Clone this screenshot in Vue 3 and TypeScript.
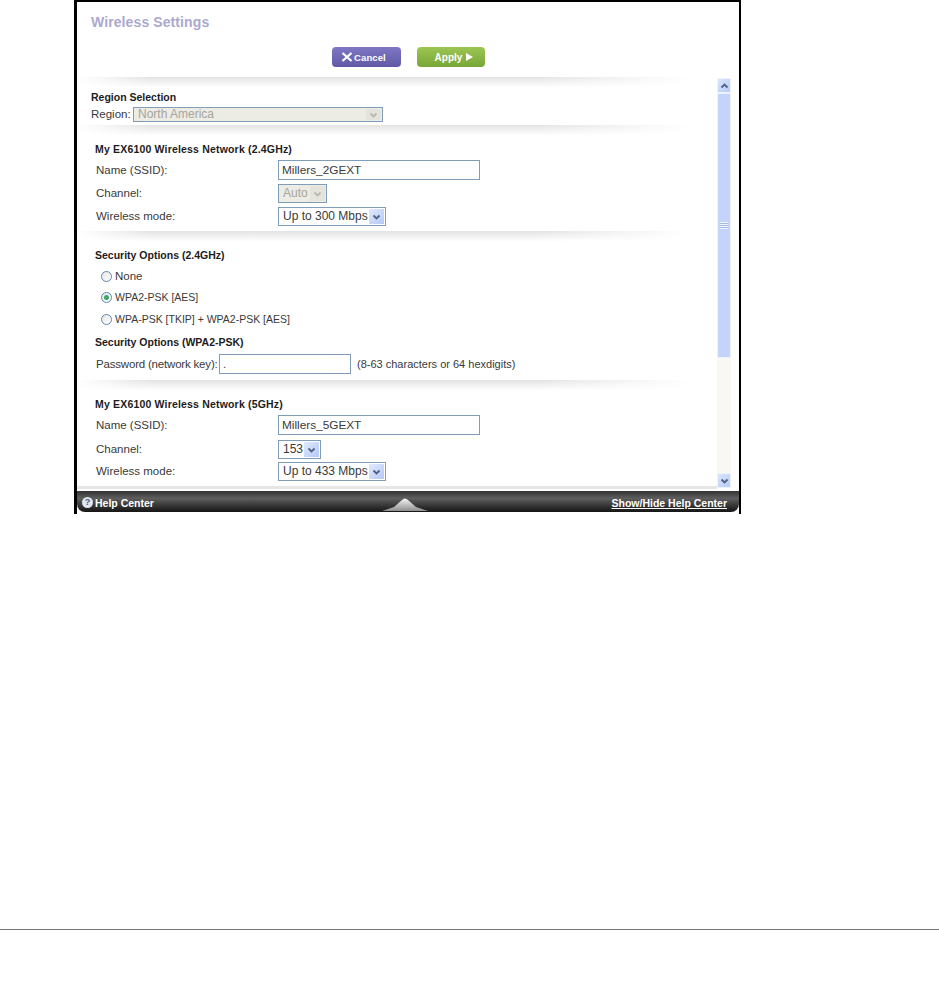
<script setup lang="ts">
const chevron = 'M1.5 1.5 L4.5 4.5 L7.5 1.5'
</script>

<template>
  <div class="page">
    <section class="frame">
      <h1 class="title">Wireless Settings</h1>
      <div class="actions">
        <button class="btn cancel">
          <svg class="x" width="12" height="10" viewBox="0 0 12 10"><path d="M1.5 1 L10.5 9 M10.5 1 L1.5 9" /></svg>
          <span>Cancel</span>
        </button>
        <button class="btn apply">Apply <span class="tri"></span></button>
      </div>
      <div class="body">
        <div class="content">
          <div class="divider"></div>
          <h2 class="head region-head">Region Selection</h2>
          <div class="region-row mt3">
            <label class="region-label">Region:</label>
            <div class="select disabled region-select"><span>North America</span>
              <span class="arrow"><svg class="chev" width="9" height="6" viewBox="0 0 9 6"><path :d="chevron" /></svg></span>
            </div>
          </div>
          <div class="divider mt3"></div>

          <h2 class="head indent wide mt4">My EX6100 Wireless Network (2.4GHz)</h2>
          <div class="row mt4 tall"><label>Name (SSID):</label><input class="input ssid" value="Millers_2GEXT" /></div>
          <div class="row mt4"><label>Channel:</label>
            <div class="select disabled auto"><span>Auto</span>
              <span class="arrow"><svg class="chev" width="9" height="6" viewBox="0 0 9 6"><path :d="chevron" /></svg></span>
            </div>
          </div>
          <div class="row mt4"><label>Wireless mode:</label>
            <div class="select mode"><span>Up to 300 Mbps</span>
              <span class="arrow"><svg class="chev" width="9" height="6" viewBox="0 0 9 6"><path :d="chevron" /></svg></span>
            </div>
          </div>
          <div class="divider mt5"></div>

          <h2 class="head indent mt4">Security Options (2.4GHz)</h2>
          <div class="radio none mt5"><span class="dot"></span>None</div>
          <div class="radio mt3"><span class="dot on"></span>WPA2-PSK [AES]</div>
          <div class="radio mt4"><span class="dot"></span>WPA-PSK [TKIP] + WPA2-PSK [AES]</div>
          <h2 class="head indent mt7">Security Options (WPA2-PSK)</h2>
          <div class="pw-row mt5 tall">
            <label>Password (network key):</label>
            <input class="input pw" value="." />
            <span class="hint">(8-63 characters or 64 hexdigits)</span>
          </div>
          <div class="divider mt6"></div>

          <h2 class="head indent wide mt4">My EX6100 Wireless Network (5GHz)</h2>
          <div class="row mt4 tall"><label>Name (SSID):</label><input class="input ssid" value="Millers_5GEXT" /></div>
          <div class="row mt5"><label>Channel:</label>
            <div class="select ch"><span>153</span>
              <span class="arrow"><svg class="chev" width="9" height="6" viewBox="0 0 9 6"><path :d="chevron" /></svg></span>
            </div>
          </div>
          <div class="row mt3"><label>Wireless mode:</label>
            <div class="select mode"><span>Up to 433 Mbps</span>
              <span class="arrow"><svg class="chev" width="9" height="6" viewBox="0 0 9 6"><path :d="chevron" /></svg></span>
            </div>
          </div>
          <div class="divider thin"></div>
        </div>
        <div class="scrollbar">
          <div class="sb-btn"><svg class="chev" width="9" height="6" viewBox="0 0 9 6"><path d="M1.5 4.5 L4.5 1.5 L7.5 4.5" /></svg></div>
          <div class="track"><div class="thumb"><span class="grip"></span></div></div>
          <div class="sb-btn"><svg class="chev" width="9" height="6" viewBox="0 0 9 6"><path :d="chevron" /></svg></div>
        </div>
      </div>
      <footer class="footer">
        <div class="help">
          <span class="q">?</span>
          <span>Help Center</span>
        </div>
        <svg class="mound" width="46" height="14" viewBox="0 0 46 14">
          <defs><linearGradient id="m" x1="0" y1="0" x2="0" y2="1"><stop offset="0" stop-color="#f4f4f4" /><stop offset="1" stop-color="#8f8f8f" /></linearGradient></defs>
          <path d="M0 14 L12 10 L20 3 Q23 0 26 3 L34 10 L46 14 Z" fill="url(#m)" />
        </svg>
        <a class="toggle">Show/Hide Help Center</a>
      </footer>
    </section>
    <div class="rule"></div>
  </div>
</template>

<style scoped>
.page {
  width: 939px;
  height: 999px;
  background: #fff;
  display: flex;
  flex-direction: column;
  font-family: "Liberation Sans", Arial, sans-serif;
  font-size: 11.5px;
  color: #3a3a3a;
  overflow: hidden;
}
.frame {
  box-sizing: border-box;
  margin-left: 74px;
  width: 667px;
  height: 514px;
  border: solid #000;
  border-width: 2px 2px 0 3px;
  display: flex;
  flex-direction: column;
  flex: none;
}
.title {
  margin: 13px 0 0 14px;
  height: 14px;
  font-size: 14px;
  line-height: 14px;
  font-weight: 700;
  color: #aba8cf;
  letter-spacing: 0.1px;
}
.actions {
  margin-top: 18px;
  height: 20px;
  display: flex;
  gap: 16px;
  padding-left: 255px;
}
.btn {
  border: 0;
  padding: 0;
  height: 20px;
  border-radius: 4px;
  font: 700 10px "Liberation Sans", Arial, sans-serif;
  color: #fff;
  display: flex;
  align-items: center;
  justify-content: center;
}
.cancel {
  box-sizing: border-box;
  width: 69px;
  padding-right: 6px;
  background: linear-gradient(#7f76c4, #5f5aa6);
  gap: 1px;
  font-size: 9.5px;
  letter-spacing: 0.1px;
}
.x path { fill: none; stroke: #fff; stroke-width: 2.2; }
.apply {
  width: 68px;
  background: linear-gradient(#9cc653, #78a636);
  gap: 4px;
  padding-left: 6px;
  box-sizing: border-box;
}
.tri {
  width: 0;
  height: 0;
  border-left: 7px solid #fff;
  border-top: 4px solid transparent;
  border-bottom: 4px solid transparent;
}
.body {
  margin-top: 10px;
  height: 414px;
  display: flex;
}
.content {
  width: 640px;
  flex: none;
  display: flex;
  flex-direction: column;
}
.divider {
  flex: none;
  width: 613px;
  height: 13px;
  background: linear-gradient(#e3e3e3, #fff 80%);
  -webkit-mask-image: linear-gradient(to right, transparent 0, #000 12%, #000 75%, transparent 100%);
  mask-image: linear-gradient(to right, transparent 0, #000 12%, #000 75%, transparent 100%);
}
.divider.thin {
  margin-top: 5px;
  width: 640px;
  height: 3px;
  background: #e6e6e6;
  -webkit-mask-image: none;
  mask-image: none;
}
.mt3 { margin-top: 3px; }
.mt4 { margin-top: 4px; }
.mt5 { margin-top: 5px; }
.mt6 { margin-top: 6px; }
.mt7 { margin-top: 7px; }
.head {
  margin-bottom: 0;
  height: 14px;
  font-size: 10.5px;
  line-height: 14px;
  font-weight: 700;
  color: #1c1c1c;
  flex: none;
}
.region-head { margin-top: 0; margin-left: 14px; }
.indent { margin-left: 18px; }
.wide { letter-spacing: 0.18px; }
.region-row {
  height: 15px;
  display: flex;
  align-items: center;
  padding-left: 14px;
  flex: none;
}
.region-label { width: 42px; margin-bottom: 2px; }
.row {
  height: 19px;
  display: flex;
  align-items: center;
  padding-left: 19px;
  flex: none;
}
.row > label { width: 182px; flex: none; margin-bottom: 2px; }
.tall { height: 20px; }
.row.tall > label { margin-bottom: 0; }
.input {
  box-sizing: border-box;
  height: 20px;
  border: 1px solid #7f9db9;
  padding: 0 3px;
  font: 11.8px "Liberation Sans", Arial, sans-serif;
  color: #3a3a3a;
  background: #fff;
  outline: none;
}
.ssid { width: 202px; }
.pw { width: 132px; margin: 0 6px 0 1px; }
.pw-row {
  display: flex;
  align-items: center;
  padding-left: 19px;
  flex: none;
}
.pw-row > label { letter-spacing: -0.19px; width: 122px; flex: none; white-space: nowrap; }
.hint { font-size: 11px; white-space: nowrap; }
.select {
  box-sizing: border-box;
  height: 100%;
  border: 1px solid #7f9db9;
  display: flex;
  align-items: center;
  justify-content: space-between;
  padding: 0 1px 0 4px;
  font-size: 12px;
  color: #3a3a3a;
  background: #fff;
}
.select > span:first-child { margin-bottom: 2px; }
.select.disabled {
  background: #ecebe4;
  color: #a6a59f;
}
.region-select { width: 250px; }
.auto { width: 49px; }
.mode { width: 108px; }
.ch { width: 43px; }
.arrow {
  width: 15px;
  height: calc(100% - 2px);
  background: linear-gradient(135deg, #e1eafe, #b4c8f6);
  display: flex;
  align-items: center;
  justify-content: center;
}
.disabled .arrow { background: #e4e3dc; }
.chev path { fill: none; stroke: #4d6185; stroke-width: 1.8; }
.disabled .chev path { stroke: #b9b8b0; }
.radio {
  height: 18px;
  display: flex;
  align-items: center;
  padding-left: 24px;
  flex: none;
  gap: 3px;
  font-size: 10.5px;
  white-space: nowrap;
}
.radio.none { font-size: 11.5px; }
.dot {
  box-sizing: border-box;
  width: 11px;
  height: 11px;
  border-radius: 50%;
  border: 1px solid #5f86bb;
  background: linear-gradient(135deg, #e6e6e2, #fff);
  display: flex;
  align-items: center;
  justify-content: center;
}
.dot.on::after {
  content: "";
  width: 5px;
  height: 5px;
  border-radius: 50%;
  background: #3aa668;
}
.scrollbar {
  margin-top: 1px;
  width: 14px;
  height: 410px;
  display: flex;
  flex-direction: column;
  flex: none;
}
.sb-btn {
  height: 15px;
  flex: none;
  background: linear-gradient(135deg, #dbe6fd, #b7cbf7);
  border: 1px solid #eef3fd;
  box-sizing: border-box;
  display: flex;
  align-items: center;
  justify-content: center;
}
.track {
  flex: 1;
  background: #f9f8f3;
}
.thumb {
  height: 265px;
  box-sizing: border-box;
  border: 1px solid #eef3fd;
  background: #c3d3fa;
  display: flex;
  align-items: center;
  justify-content: center;
}
.grip {
  width: 8px;
  height: 7px;
  background: repeating-linear-gradient(#f2f6fe 0 1px, #a5b9e8 1px 2px);
}
.footer {
  height: 21px;
  margin-top: 0;
  border-radius: 0 0 8px 8px;
  background: linear-gradient(#333, #5e5e5e 35%, #2a2a2a 80%, #151515);
  display: grid;
  grid-template-columns: 305px 46px 1fr;
  align-items: center;
  color: #fff;
  font-size: 10.5px;
  font-weight: 700;
  flex: none;
}
.help {
  display: flex;
  align-items: center;
  gap: 2px;
  padding-left: 5px;
  padding-top: 2px;
}
.q {
  width: 11px;
  height: 11px;
  border-radius: 50%;
  background: #dfe6f2;
  color: #4a5a80;
  font-size: 9px;
  line-height: 11px;
  text-align: center;
}
.mound { align-self: end; margin-bottom: 1px; }
.toggle {
  justify-self: end;
  padding: 2px 12px 0 0;
  text-decoration: underline;
  color: #fff;
}
.rule {
  margin-top: 415px;
  height: 1px;
  background: #777;
  flex: none;
}
</style>
